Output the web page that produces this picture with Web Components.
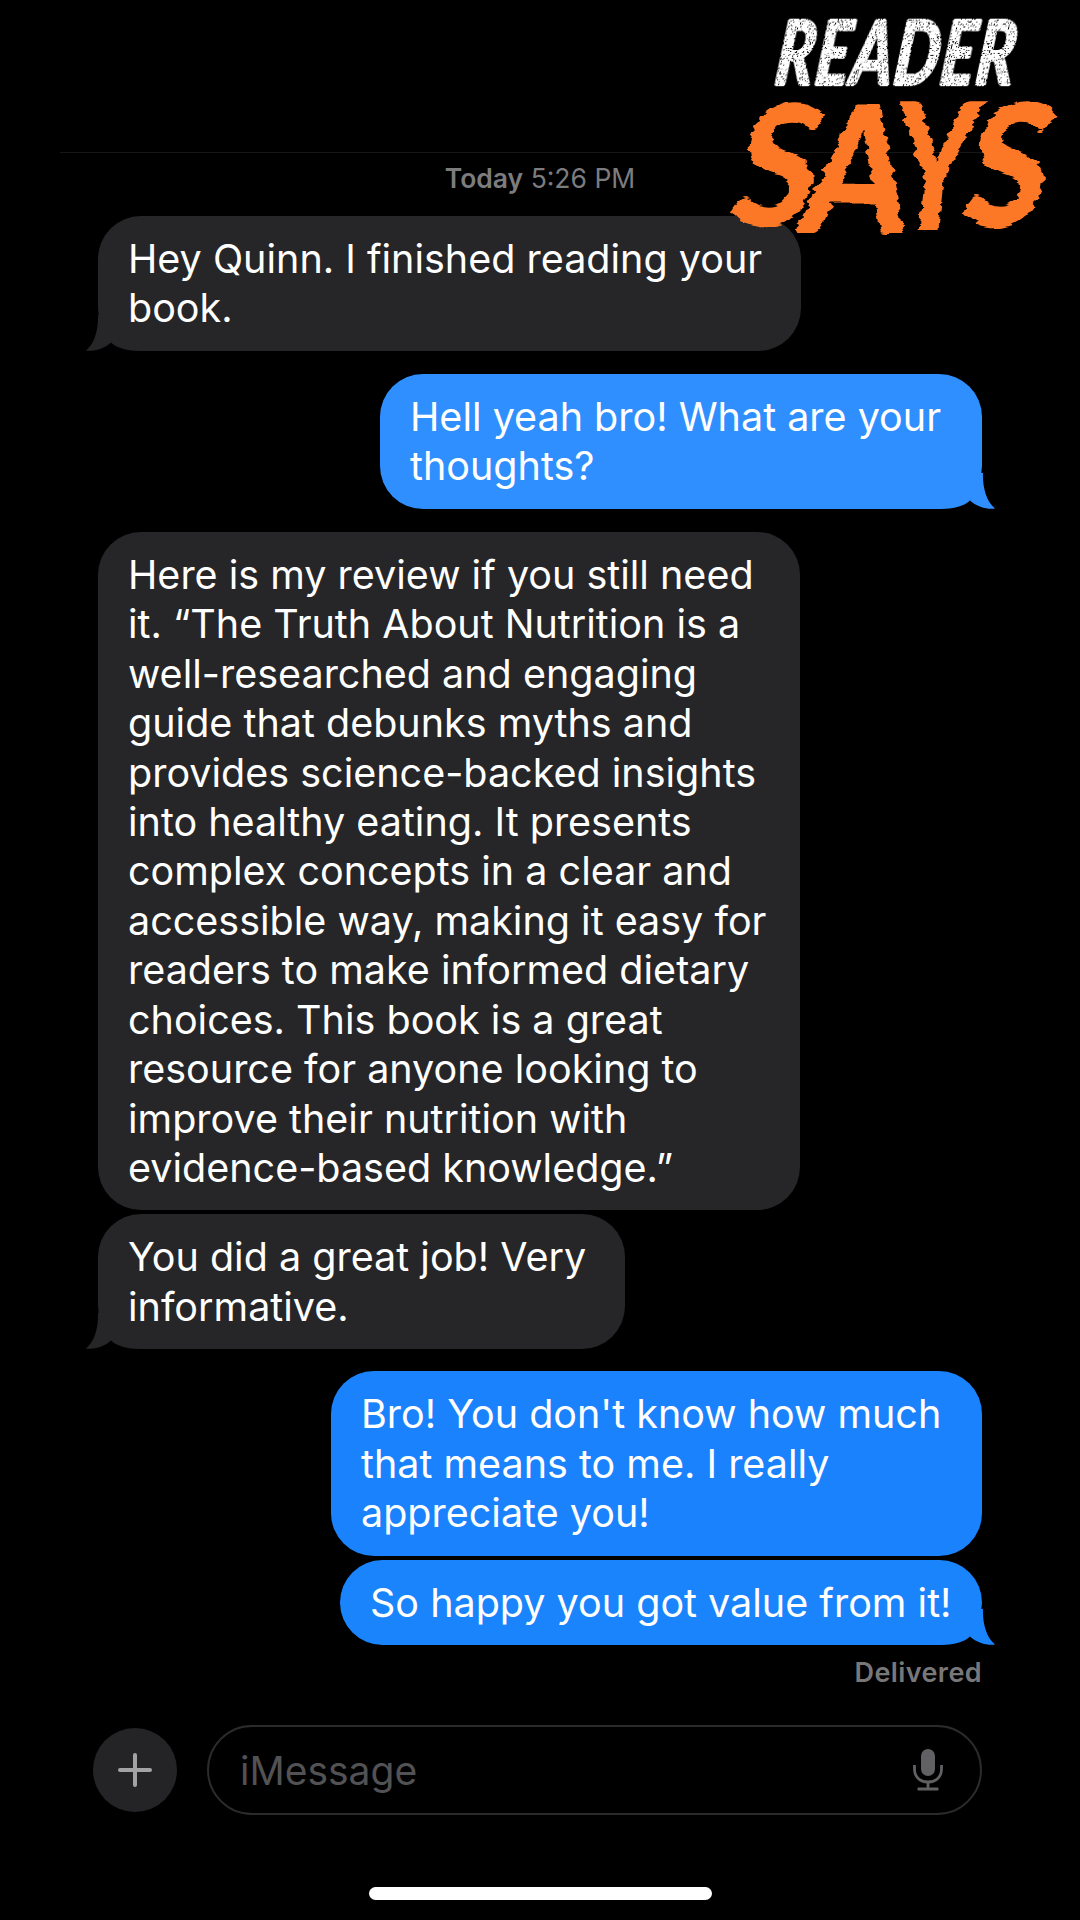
<!DOCTYPE html>
<html>
<head>
<meta charset="utf-8">
<style>
    html, body { margin: 0; background: #000; }
    body { width: 1080px; height: 1920px; overflow: hidden; font-family: Inter, "Noto Sans", sans-serif; }
</style>
</head>
<body>
<chat-screen>
    <reader-logo slot="overlay"></reader-logo>
    <chat-stamp><b>Today</b> 5:26 PM</chat-stamp>
    <chat-bubble width="703" gap="21">Hey Quinn. I finished reading your<br>book.</chat-bubble>
    <chat-bubble sent tail width="602" gap="23" color="#2f8ffe">Hell yeah bro! What are your<br>thoughts?</chat-bubble>
    <chat-bubble notail width="702" gap="23">Here is my review if you still need<br>it. “The Truth About Nutrition is a<br>well-researched and engaging<br>guide that debunks myths and<br>provides science-backed insights<br>into healthy eating. It presents<br>complex concepts in a clear and<br>accessible way, making it easy for<br>readers to make informed dietary<br>choices. This book is a great<br>resource for anyone looking to<br>improve their nutrition with<br>evidence-based knowledge.”</chat-bubble>
    <chat-bubble width="527" gap="4">You did a great job! Very<br>informative.</chat-bubble>
    <chat-bubble sent notail width="651" gap="22" color="#1a82fc">Bro! You don't know how much<br>that means to me. I really<br>appreciate you!</chat-bubble>
    <chat-bubble sent tail width="642" gap="4" color="#1a84fd">So happy you got value from it!</chat-bubble>
    <chat-receipt>Delivered</chat-receipt>
    <chat-composer slot="footer"></chat-composer>
    <home-bar slot="footer"></home-bar>
</chat-screen>

<script>
class ChatScreen extends HTMLElement {
    constructor() {
        super()
        this.attachShadow({mode: 'open'})
        this.shadowRoot.innerHTML = `
            <style>
                :host { display: flex; flex-direction: column; position: relative; width: 1080px; height: 1920px; background: #000; color: #fff; }
                .rule { height: 1px; margin: 152px 80px 0 60px; background: #161616; }
                .thread { display: flex; flex-direction: column; padding: 0 98px; }
                .bottom { display: flex; flex-direction: column; margin-top: auto; }
            </style>
            <slot name="overlay"></slot>
            <div class="rule"></div>
            <div class="thread"><slot></slot></div>
            <div class="bottom"><slot name="footer"></slot></div>
        `
    }
}

class ChatStamp extends HTMLElement {
    constructor() {
        super()
        this.attachShadow({mode: 'open'})
        this.shadowRoot.innerHTML = `
            <style>
                :host { display: block; margin-top: 8px; height: 34px; line-height: 34px; text-align: center; font-size: 26.500px; color: #7c7c7e; }
                ::slotted(b) { font-weight: 600; }
            </style>
            <slot></slot>
        `
    }
}

class ChatBubble extends HTMLElement {
    constructor() {
        super()
        this.attachShadow({mode: 'open'})
        this.shadowRoot.innerHTML = `
            <style>
                :host { display: block; position: relative; box-sizing: border-box; padding: 19px 20px 17px 30px; border-radius: 43px; background: var(--bubble, #262628); font-size: 39.500px; line-height: 49.430px; color: #fff; white-space: nowrap; }
                :host([sent]) { align-self: flex-end; padding-left: 30px; }
                .text { position: relative; display: block; }
                svg { position: absolute; left: -12px; bottom: 0; width: 56px; height: 36px; fill: var(--bubble, #262628); }
                :host([sent]) svg { left: auto; right: -13px; transform: scaleX(-1); }
                :host([notail]) svg { display: none; }
            </style>
            <svg viewBox="0 0 56 36"><path d="M12 0C12.500 14 9 28 0 35.600C8 36.500 18 34 25 27.500C31 33 40 36 56 36V0Z"/></svg>
            <span class="text"><slot></slot></span>
        `
    }

    connectedCallback() {
        this.style.width = this.getAttribute('width') + 'px'
        this.style.marginTop = this.getAttribute('gap') + 'px'
        if (this.hasAttribute('color')) this.style.setProperty('--bubble', this.getAttribute('color'))
    }
}

class ChatReceipt extends HTMLElement {
    constructor() {
        super()
        this.attachShadow({mode: 'open'})
        this.shadowRoot.innerHTML = `
            <style>
                :host { display: block; margin-top: 12px; height: 32px; line-height: 32px; text-align: right; font-size: 27px; letter-spacing: .4px; font-weight: 600; color: #78787a; }
            </style>
            <slot></slot>
        `
    }
}

class ChatComposer extends HTMLElement {
    constructor() {
        super()
        this.attachShadow({mode: 'open'})
        this.shadowRoot.innerHTML = `
            <style>
                :host { display: flex; align-items: center; gap: 30px; margin: 0 98px 72px 93px; }
                .plus { display: flex; align-items: center; justify-content: center; flex: none; width: 84px; height: 84px; border-radius: 50%; background: #242426; }
                .plus svg { width: 34px; height: 34px; stroke: #a3a3a5; stroke-width: 4; stroke-linecap: round; }
                .field { display: flex; align-items: center; justify-content: space-between; flex: 1; box-sizing: border-box; height: 90px; padding: 0 37px 0 31px; border: 2px solid #2b2b2d; border-radius: 45px; font-size: 39px; color: #525254; }
                .mic { width: 30px; height: 42px; fill: #616163; }
            </style>
            <div class="plus"><svg viewBox="0 0 34 34"><path d="M17 2V32M2 17H32"/></svg></div>
            <div class="field">
                <span>iMessage</span>
                <svg class="mic" viewBox="0 0 30 42"><rect x="8" y="0" width="14" height="27" rx="7"/><path d="M1.500 16V20C1.500 28 7 33 15 33S28.500 28 28.500 20V16" fill="none" stroke="#616163" stroke-width="2.800"/><rect x="13.600" y="33" width="2.800" height="6"/><rect x="4.500" y="38.500" width="21" height="3" rx="1"/></svg>
            </div>
        `
    }
}

class HomeBar extends HTMLElement {
    constructor() {
        super()
        this.attachShadow({mode: 'open'})
        this.shadowRoot.innerHTML = `
            <style>
                :host { display: block; width: 343px; height: 13px; margin: 0 auto 20px; border-radius: 7px; background: #fff; }
            </style>
        `
    }
}

// The logo sits on top of the thread, so it is the one absolute block on the page
class ReaderLogo extends HTMLElement {
    constructor() {
        super()
        this.attachShadow({mode: 'open'})
        this.shadowRoot.innerHTML = `
            <style>
                :host { display: block; position: absolute; left: 690px; top: 0; width: 390px; height: 245px; z-index: 2; }
                .reader, .says { position: absolute; display: block; white-space: nowrap; }
                .reader { left: 0; top: 5px; font: 900 90px/90px Lato, sans-serif; color: #fff; text-shadow: 1.500px 0 #fff, -1.500px 0 #fff, 0 1px #fff, 0 -1px #fff; letter-spacing: 3px; filter: url(#speckle); transform-origin: 0 0; transform: translateX(98px) skewX(-12deg) scaleX(.65); }
                .says { left: 0; top: 0; width: 390px; height: 245px; font: 900 170px/170px Lato, sans-serif; color: #fc7826; filter: url(#brush); }
                .says span { position: absolute; display: block; transform-origin: 0 0; }
                .s1 { left: 67px; top: 75px; transform: skewX(-12deg) scaleX(.88); }
                .a { left: 128px; top: 75px; transform: skewX(-8deg) scale(.9, 1.05); }
                .y { left: 214px; top: 74px; transform: skewX(-6deg) scale(.74, 1.02); }
                .s2 { left: 260px; top: 75px; transform: translateX(38px) skewX(-12deg) scaleX(.88); }
            </style>
            <svg width="0" height="0" style="position:absolute">
                <filter id="speckle" x="-5%" y="-5%" width="110%" height="110%">
                    <feTurbulence type="fractalNoise" baseFrequency=".6" numOctaves="2" seed="4" result="n"/>
                    <feColorMatrix in="n" type="matrix" values="0 0 0 0 0  0 0 0 0 0  0 0 0 0 0  0 0 0 -18 6.800" result="holes"/>
                    <feComposite in="SourceGraphic" in2="holes" operator="out"/>
                </filter>
                <filter id="brush" x="-5%" y="-5%" width="110%" height="110%">
                    <feTurbulence type="fractalNoise" baseFrequency=".012 .16" numOctaves="2" seed="7" result="n"/>
                    <feDisplacementMap in="SourceGraphic" in2="n" scale="10" xChannelSelector="R" yChannelSelector="G"/>
                </filter>
            </svg>
            <span class="reader">READER</span>
            <span class="says"><span class="s1">S</span><span class="a">A</span><span class="y">Y</span><span class="s2">S</span></span>
        `
    }
}

customElements.define('chat-screen', ChatScreen)
customElements.define('chat-stamp', ChatStamp)
customElements.define('chat-bubble', ChatBubble)
customElements.define('chat-receipt', ChatReceipt)
customElements.define('chat-composer', ChatComposer)
customElements.define('home-bar', HomeBar)
customElements.define('reader-logo', ReaderLogo)
</script>
</body>
</html>
